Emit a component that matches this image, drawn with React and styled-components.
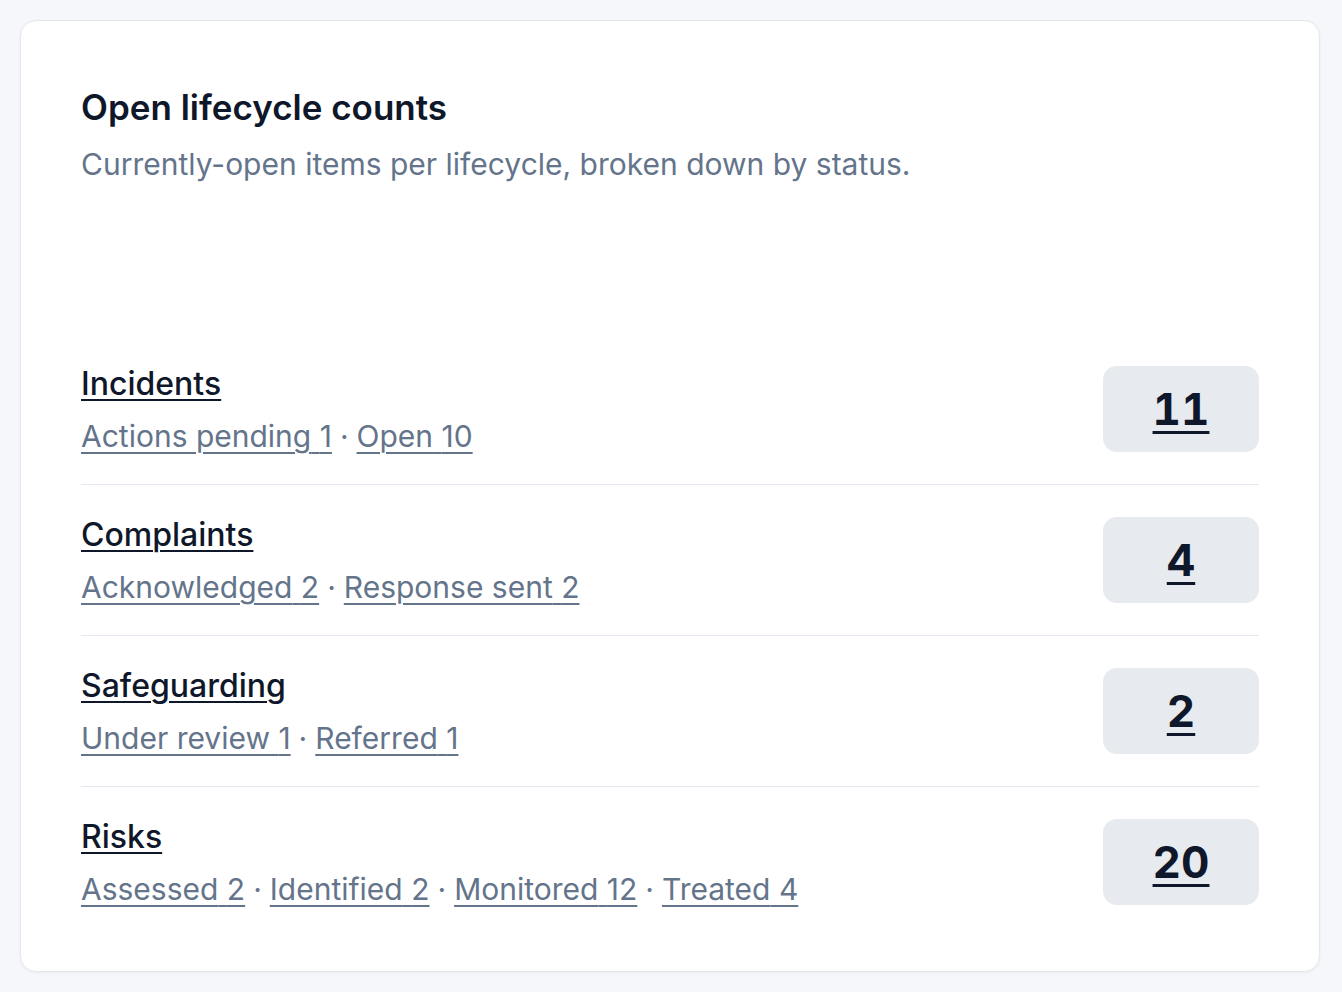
import React from "react";
import styled, { createGlobalStyle } from "styled-components";

const Global = createGlobalStyle`
  html, body { margin: 0; padding: 0; background: #f6f7fa; }
  body { font-family: Inter, "Noto Sans", sans-serif; -webkit-font-smoothing: antialiased; }
  * { box-sizing: border-box; }
`;

const Page = styled.div`
  padding: 20px 22px 20px 20px;
  min-height: 992px;
`;

const Card = styled.section`
  background: #ffffff;
  border: 1px solid #e4e7ec;
  border-radius: 16px;
  box-shadow: 0 1px 3px rgba(15, 23, 42, 0.05);
  padding: 66px 60px 34px 60px;
`;

const Header = styled.header`
  margin-bottom: 151px;
`;

const Title = styled.h2`
  margin: 0;
  font-size: 35px;
  line-height: 40px;
  font-weight: 600;
  color: #0f172a;
`;

const Subtitle = styled.p`
  margin: 18px 0 0;
  font-size: 30px;
  line-height: 38px;
  color: #64748b;
  font-weight: 400;
`;

const List = styled.ul`
  list-style: none;
  margin: 0;
  padding: 0;
`;

const Row = styled.li`
  display: flex;
  align-items: center;
  justify-content: space-between;
  padding: 32px 0;
  border-top: ${(p) => (p.$first ? "none" : "1px solid #e2e8f0")};
`;

const Info = styled.div`
  display: flex;
  flex-direction: column;
  gap: 20px;
  padding-top: 1px;
`;

const Name = styled.a`
  font-size: 32px;
  line-height: 32px;
  font-weight: 500;
  color: #0f172a;
  text-decoration: underline;
  text-underline-offset: 4px;
  text-decoration-thickness: 2px;
  align-self: flex-start;
`;

const Statuses = styled.div`
  font-size: 30px;
  line-height: 32px;
  color: #64748b;
`;

const StatusLink = styled.a`
  color: #64748b;
  text-decoration: underline;
  text-underline-offset: 5px;
  text-decoration-thickness: 2px;
`;

const Sep = styled.span`
  margin: 0 8px;
`;

const Count = styled.a`
  flex: none;
  width: 156px;
  height: 86px;
  border-radius: 14px;
  background: #e7eaef;
  display: flex;
  align-items: center;
  justify-content: center;
  font-size: 44px;
  font-weight: 700;
  font-variant-numeric: tabular-nums;
  color: #0f172a;
  text-decoration: underline;
  text-underline-offset: 6px;
  text-decoration-thickness: 3px;
`;

const data = [
  { name: "Incidents", total: 11, statuses: [["Actions pending", 1], ["Open", 10]] },
  { name: "Complaints", total: 4, statuses: [["Acknowledged", 2], ["Response sent", 2]] },
  { name: "Safeguarding", total: 2, statuses: [["Under review", 1], ["Referred", 1]] },
  {
    name: "Risks",
    total: 20,
    statuses: [["Assessed", 2], ["Identified", 2], ["Monitored", 12], ["Treated", 4]],
  },
];

export default function App() {
  return (
    <Page>
      <Global />
      <Card>
        <Header>
          <Title>Open lifecycle counts</Title>
          <Subtitle>Currently-open items per lifecycle, broken down by status.</Subtitle>
        </Header>
        <List>
          {data.map((row, i) => (
            <Row key={row.name} $first={i === 0}>
              <Info>
                <Name href="#">{row.name}</Name>
                <Statuses>
                  {row.statuses.map(([label, n], j) => (
                    <React.Fragment key={label}>
                      {j > 0 && <Sep>·</Sep>}
                      <StatusLink href="#">
                        {label} {n}
                      </StatusLink>
                    </React.Fragment>
                  ))}
                </Statuses>
              </Info>
              <Count href="#">{row.total}</Count>
            </Row>
          ))}
        </List>
      </Card>
    </Page>
  );
}
